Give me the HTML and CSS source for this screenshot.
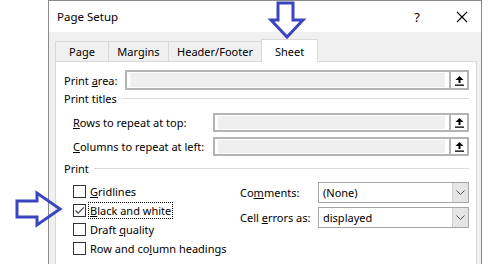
FILE: index.html
```html
<!DOCTYPE html>
<html lang="en">
<head>
    <meta charset="UTF-8">
    <title>Page Setup</title>
    <link rel="stylesheet" href="styles.css">
</head>
<body>
    <div class="dialog">
        <div class="titlebar">
            <span class="title">Page Setup</span>
            <span class="help">?</span>
            <svg class="close" width="12" height="12" viewBox="0 0 12 12">
                <path d="M1 1 L11 11 M11 1 L1 11" stroke="#000" stroke-width="1.1" fill="none"/>
            </svg>
        </div>

        <div class="tabs">
            <div class="tab">Page</div>
            <div class="tab">Margins</div>
            <div class="tab">Header/Footer</div>
            <div class="tab active">Sheet</div>
        </div>

        <div class="panel">
            <div class="row">
                <label class="label-area">Print <u>a</u>rea:</label>
                <div class="ref">
                    <div class="field"></div>
                    <div class="pick">
                        <svg width="9" height="11" viewBox="0 0 9 11">
                            <path d="M4.5 1 L8.5 5 L5.5 5 L5.5 8 L3.5 8 L3.5 5 L0.5 5 Z" fill="#000"/>
                            <rect x="0" y="9.5" width="9" height="1.3" fill="#000"/>
                        </svg>
                    </div>
                </div>
            </div>

            <div class="group-title">Print titles<span class="rule"></span></div>

            <div class="row indent">
                <label class="label-titles"><u>R</u>ows to repeat at top:</label>
                <div class="ref">
                    <div class="field"></div>
                    <div class="pick">
                        <svg width="9" height="11" viewBox="0 0 9 11">
                            <path d="M4.5 1 L8.5 5 L5.5 5 L5.5 8 L3.5 8 L3.5 5 L0.5 5 Z" fill="#000"/>
                            <rect x="0" y="9.5" width="9" height="1.3" fill="#000"/>
                        </svg>
                    </div>
                </div>
            </div>
            <div class="row indent">
                <label class="label-titles"><u>C</u>olumns to repeat at left:</label>
                <div class="ref">
                    <div class="field"></div>
                    <div class="pick">
                        <svg width="9" height="11" viewBox="0 0 9 11">
                            <path d="M4.5 1 L8.5 5 L5.5 5 L5.5 8 L3.5 8 L3.5 5 L0.5 5 Z" fill="#000"/>
                            <rect x="0" y="9.5" width="9" height="1.3" fill="#000"/>
                        </svg>
                    </div>
                </div>
            </div>

            <div class="group-title print">Print<span class="rule"></span></div>

            <div class="print-options">
                <div class="checks">
                    <div class="check"><span class="box"></span><span><u>G</u>ridlines</span></div>
                    <div class="check"><span class="box checked">
                        <svg width="11" height="11" viewBox="0 0 11 11">
                            <path d="M1.5 5.5 L4.2 8.2 L9.8 2.4" stroke="#444" stroke-width="1.2" fill="none"/>
                        </svg>
                    </span><span class="focus"><u>B</u>lack and white</span></div>
                    <div class="check"><span class="box"></span><span>Draft <u>q</u>uality</span></div>
                    <div class="check"><span class="box"></span><span>Row and co<u>l</u>umn headings</span></div>
                </div>
                <div class="selects">
                    <div class="select-row">
                        <label>Co<u>m</u>ments:</label>
                        <div class="select">
                            <span class="value">(None)</span>
                            <span class="drop">
                                <svg width="9" height="5" viewBox="0 0 9 5"><path d="M0.5 0.5 L4.5 4.5 L8.5 0.5" stroke="#555" fill="none"/></svg>
                            </span>
                        </div>
                    </div>
                    <div class="select-row">
                        <label>Cell <u>e</u>rrors as:</label>
                        <div class="select">
                            <span class="value">displayed</span>
                            <span class="drop">
                                <svg width="9" height="5" viewBox="0 0 9 5"><path d="M0.5 0.5 L4.5 4.5 L8.5 0.5" stroke="#555" fill="none"/></svg>
                            </span>
                        </div>
                    </div>
                </div>
            </div>
        </div>
    </div>

    <!-- callout arrows drawn over the dialog -->
    <svg class="callouts" width="488" height="264" viewBox="0 0 488 264">
        <polygon points="278,3 293,3 293,20 303,20 287,37 271,20 278,20" />
        <polygon points="17,201 37,201 37,193 60,209 37,225 37,217 17,217" />
    </svg>
</body>
</html>
```

FILE: styles.css
```css
* {
    margin: 0;
    padding: 0;
    box-sizing: border-box;
}

body {
    background: #fff;
    font-family: "Noto Sans", "Segoe UI", sans-serif;
    font-size: 11px;
    color: #000;
    overflow: hidden;
    height: 264px;
    position: relative;
    white-space: nowrap;
}

.dialog {
    margin-left: 48px;
    width: 434px;
    height: 300px;
    border: 1px solid #8a8a8a;
    background: #f0f0f0;
}

.titlebar {
    height: 31px;
    background: #fff;
    display: flex;
    align-items: center;
    padding: 0 0 0 8px;
}

.title {
    font-size: 11.5px;
    flex: 1;
}

.help {
    font-size: 13px;
    margin-right: 36px;
}

.close {
    margin-right: 13px;
}

.tabs {
    display: flex;
    margin-top: 9px;
    padding-left: 6px;
    height: 20px;
    align-items: flex-end;
}

.tab {
    height: 20px;
    line-height: 19px;
    text-align: center;
    border: 1px solid #d9d9d9;
    border-right: none;
    border-bottom: none;
}

.tab:nth-child(1) { width: 53px; }
.tab:nth-child(2) { width: 60px; }
.tab:nth-child(3) { width: 93px; }

.tab.active {
    width: 57px;
    height: 23px;
    line-height: 23px;
    margin-bottom: -1px;
    background: #fff;
    border-right: 1px solid #d9d9d9;
    position: relative;
}

.panel {
    margin-left: 6px;
    width: 422px;
    height: 230px;
    background: #fff;
    border: 1px solid #d9d9d9;
    padding: 8px 7px 0 8px;
}

.row {
    display: flex;
    align-items: center;
    height: 20px;
    margin-bottom: 4px;
}

.row.indent {
    padding-left: 9px;
    height: 19px;
    margin-bottom: 5px;
}

.label-area {
    width: 61px;
}

.label-titles {
    width: 140px;
}

.ref {
    flex: 1;
    height: 20px;
    display: flex;
    border: 2px solid #b4b4b4;
    background: #fff;
    padding: 1px 0 1px 3px;
}

.row.indent .ref {
    height: 19px;
}

.field {
    flex: 1;
    background: #efefef;
    margin-right: 4px;
}

.pick {
    width: 20px;
    margin: -3px -2px -3px 0;
    border: 2px solid #b4b4b4;
    background: #fff;
    display: flex;
    align-items: center;
    justify-content: center;
}

.group-title {
    display: flex;
    align-items: center;
    height: 14px;
    margin: -3px 0 8px 0;
}

.rule {
    flex: 1;
    height: 1px;
    background: #dcdcdc;
    margin-left: 5px;
    margin-top: 1px;
}

.group-title.print {
    margin-top: 0;
    margin-bottom: 7px;
}

.print-options {
    display: flex;
}

.checks {
    width: 176px;
    padding-left: 9px;
}

.check {
    display: flex;
    align-items: center;
    height: 19px;
}

.box {
    width: 13px;
    height: 13px;
    border: 1px solid #333;
    background: #fff;
    margin-right: 4px;
    display: flex;
    align-items: center;
    justify-content: center;
}

.focus {
    outline: 1px dotted #000;
    outline-offset: 0;
    padding: 0 1px;
    margin-left: -1px;
}

.selects {
    flex: 1;
}

.select-row {
    display: flex;
    align-items: center;
    height: 21px;
    margin-bottom: 4px;
}

.select-row label {
    width: 78px;
}

.select {
    flex: 1;
    height: 21px;
    border: 1px solid #a6a6a6;
    background: #fff;
    display: flex;
    align-items: center;
}

.value {
    flex: 1;
    padding-left: 4px;
}

.drop {
    width: 16px;
    height: 19px;
    background: #e5e5e5;
    border-left: 1px solid #cfcfcf;
    display: flex;
    align-items: center;
    justify-content: center;
}

.callouts {
    position: absolute;
    left: 0;
    top: 0;
    pointer-events: none;
}

.callouts polygon {
    fill: none;
    stroke: #3c45c0;
    stroke-width: 3;
    stroke-linejoin: miter;
}
```
